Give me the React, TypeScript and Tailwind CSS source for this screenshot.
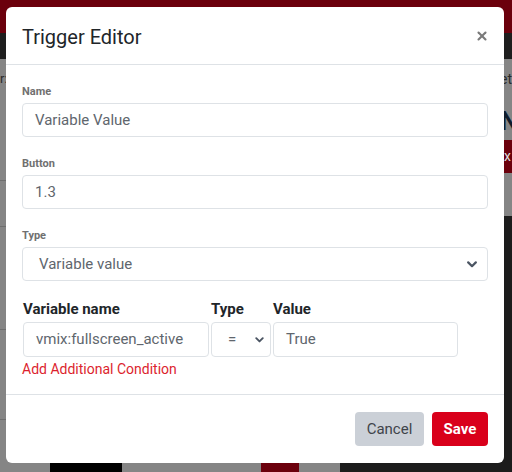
import { X } from 'lucide-react'

function Chevron({ className }: { className?: string }) {
  return (
    <svg viewBox="0 0 10 7" className={className} fill="none">
      <path d="M1.2 1.4 5 5.2l3.8-3.8" stroke="#4b5563" strokeWidth="2.2" strokeLinecap="round" strokeLinejoin="round" />
    </svg>
  )
}

function Field({ label, value }: { label: string; value: string }) {
  return (
    <div className="mb-5">
      <div className="text-[11px] leading-[14px] font-bold text-[#707070] mb-1">{label}</div>
      <div className="h-[34px] border border-[#dee2e6] rounded-[4px] px-[12px] flex items-center text-[15px] text-[#60666d]">
        {value}
      </div>
    </div>
  )
}

export default function App() {
  return (
    <div
      className="relative w-[512px] h-[472px] overflow-hidden bg-[#858585]"
      style={{ fontFamily: 'Roboto, "Liberation Sans", sans-serif' }}
    >
      {/* page behind the backdrop */}
      <div className="h-[33px] bg-[#6b000c]" />
      <div className="h-[26px] bg-[#1e1e1e]" />
      <div className="flex h-[413px]">
        <div className="w-[340px] shrink-0 flex flex-col">
          <div className="h-[122px] border-b border-[#6e6e6e] text-[13px] text-[#2a2a2a] pt-[10px]">r:</div>
          <div className="h-[46px] border-b border-[#6e6e6e]" />
          <div className="h-[103px] border-b border-[#6e6e6e]" />
          <div className="h-[90px] border-b border-[#6e6e6e]" />
          <div className="flex-1 flex items-end">
            <div className="w-[50px] h-[9px]" />
            <div className="w-[72px] h-[9px] bg-black" />
            <div className="w-[139px] h-[9px]" />
            <div className="w-[38px] h-[9px] bg-[#6b000c]" />
          </div>
        </div>
        <div className="flex-1 flex flex-col">
          <div className="h-[157px] bg-[#858585] pl-[160px] pt-[10px]">
            <div className="text-[14px] text-[#2a2a2a]">et</div>
            <div className="text-[26px] font-bold text-[#0f1b2a] mt-[16px] leading-[30px]">N</div>
            <div className="h-[33px] bg-[#6b000c] mt-[4px] text-[#dddddd] text-[14px] pl-[4px] leading-[33px]">x</div>
          </div>
          <div className="flex-1 bg-[#1c1c1c]" />
        </div>
      </div>

      {/* modal */}
      <div className="absolute left-[6px] top-[7px] w-[498px] h-[456px] bg-white rounded-[6px] flex flex-col">
        <div className="h-[58px] border-b border-[#dee2e6] flex items-center justify-between pl-[16px] pr-[16px]">
          <div className="text-[20px] font-normal text-[#212529] leading-[26px] mt-[2px]">Trigger Editor</div>
          <X size={14} strokeWidth={3.6} className="text-[#7a7a7a] mr-[-1px]" />
        </div>

        <div className="px-[16px] pt-[20px] h-[330px] border-b border-[#dee2e6]">
          <Field label="Name" value="Variable Value" />
          <Field label="Button" value="1.3" />
          <div className="mb-[18px]">
            <div className="text-[11px] leading-[14px] font-bold text-[#707070] mb-1">Type</div>
            <div className="h-[34px] border border-[#dee2e6] rounded-[4px] pl-[16px] pr-[10px] flex items-center justify-between text-[15px] text-[#60666d]">
              <span>Variable value</span>
              <Chevron className="w-[10px] h-[7px]" />
            </div>
          </div>

          <div className="flex gap-[2px] pl-[1px]">
            <div className="w-[186px]">
              <div className="text-[15px] font-bold text-[#212529] leading-[20px] mb-[3px]">Variable name</div>
              <div className="h-[35px] border border-[#dee2e6] rounded-[4px] pl-[12px] flex items-center text-[15px] text-[#60666d]">
                vmix:fullscreen_active
              </div>
            </div>
            <div className="w-[60px]">
              <div className="text-[15px] font-bold text-[#212529] leading-[20px] mb-[3px]">Type</div>
              <div className="h-[35px] border border-[#dee2e6] rounded-[4px] pl-[16px] pr-[6px] flex items-center justify-between text-[15px] text-[#60666d]">
                <span>=</span>
                <Chevron className="w-[9px] h-[6px]" />
              </div>
            </div>
            <div className="w-[185px]">
              <div className="text-[15px] font-bold text-[#212529] leading-[20px] mb-[3px]">Value</div>
              <div className="h-[35px] border border-[#dee2e6] rounded-[4px] pl-[12px] flex items-center text-[15px] text-[#60666d]">
                True
              </div>
            </div>
          </div>
          <div className="text-[14px] leading-[20px] text-[#dc1f2e] mt-[2px]">Add Additional Condition</div>
        </div>

        <div className="flex-1 flex items-center justify-end gap-[8px] pr-[16px]">
          <button className="h-[34px] w-[69px] rounded-[4px] bg-[#cbd0d7] text-[15px] text-[#3f444a]">Cancel</button>
          <button className="h-[34px] w-[56px] rounded-[4px] bg-[#d9001b] text-[15px] font-bold text-white">Save</button>
        </div>
      </div>
    </div>
  )
}
